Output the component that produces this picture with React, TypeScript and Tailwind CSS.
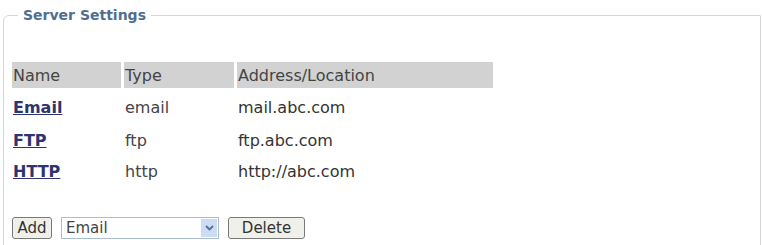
const servers = [
  { name: 'Email', type: 'email', address: 'mail.abc.com' },
  { name: 'FTP', type: 'ftp', address: 'ftp.abc.com' },
  { name: 'HTTP', type: 'http', address: 'http://abc.com' },
];

export default function App() {
  return (
    <div className="w-[762px] h-[245px] overflow-hidden bg-white pl-[3px] pt-[7px] font-['DejaVu_Sans',sans-serif] text-[#333]">
      <fieldset className="w-[758px] h-[300px] border border-[#d6d6d6] rounded-tl-[6px] p-0">
        <legend className="ml-[14px] px-[5px] text-[14px] leading-[17px] font-bold text-[#4f6f90]">
          Server Settings
        </legend>

        {/* server list */}
        <table className="ml-[5px] mt-[38px] border-separate border-spacing-x-[3px] border-spacing-y-0 text-[16px]">
          <thead>
            <tr className="h-[26px] bg-[#d2d2d2] text-left text-[#444]">
              <th className="w-[109px] px-[1px] pt-[2px] font-normal">Name</th>
              <th className="w-[110px] px-[1px] pt-[2px] font-normal">Type</th>
              <th className="w-[256px] px-[1px] pt-[2px] font-normal">Address/Location</th>
            </tr>
          </thead>
          <tbody>
            {servers.map((s, i) => (
              <tr key={s.name} className={i === 0 ? 'h-[38px] align-bottom' : i === 1 ? 'h-[33px] align-bottom' : 'h-[31px] align-bottom'}>
                <td className="px-[1px] pb-[6px]">
                  <a href="#" className="font-bold text-[#2d3470] underline">
                    {s.name}
                  </a>
                </td>
                <td className="px-[1px] pb-[6px] text-[#444]">{s.type}</td>
                <td className="px-[1px] pb-[6px] text-[#333]">{s.address}</td>
              </tr>
            ))}
          </tbody>
        </table>

        {/* controls */}
        <div className="ml-[8px] mt-[27px] flex items-center gap-[9px] text-[15px]">
          <button className="h-[22px] w-[40px] rounded-[3px] border border-[#7a7a7a] bg-[#f0f0ea] text-[#333] leading-none">
            Add
          </button>
          <div className="flex h-[22px] w-[158px] items-center border border-[#a9bcd4] bg-white">
            <span className="flex-1 pl-[4px] text-[#444] leading-none">Email</span>
            <span className="mr-[1px] flex h-[18px] w-[16px] items-center justify-center bg-[#cddcf2]">
              <svg width="9" height="6" viewBox="0 0 9 6">
                <path d="M1 1 L4.5 4.5 L8 1" stroke="#4d6fa8" strokeWidth="1.8" fill="none" />
              </svg>
            </span>
          </div>
          <button className="h-[22px] w-[77px] rounded-[3px] border border-[#7a7a7a] bg-[#f0f0ea] text-[#333] leading-none">
            Delete
          </button>
        </div>
      </fieldset>
    </div>
  );
}
